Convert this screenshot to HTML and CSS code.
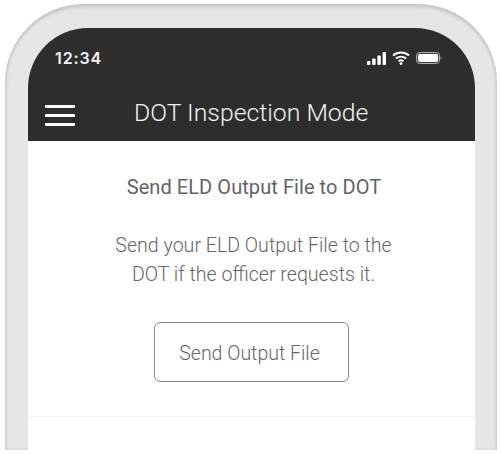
FILE: index.html
```html
<!DOCTYPE html>
<html lang="en">
<head>
<meta charset="utf-8">
<title>DOT Inspection Mode</title>
<link rel="stylesheet" href="styles.css">
</head>
<body>
<div class="phone">
  <div class="screen">
    <header class="appbar">
      <div class="status">
        <span class="time">12:34</span>
        <div class="status-icons">
          <svg class="signal" width="20" height="13" viewBox="0 0 20 13"><rect x="0" y="9" width="3.4" height="4" rx=".8"/><rect x="5.2" y="6.5" width="3.4" height="6.5" rx=".8"/><rect x="10.4" y="3.5" width="3.4" height="9.5" rx=".8"/><rect x="15.6" y="0" width="3.4" height="13" rx=".8"/></svg>
          <svg class="wifi" width="18" height="14" viewBox="0 0 18 14"><path d="M1 4.600C5.600.6 12.400.6 17 4.600" /><path d="M3.900 7.600C6.900 5 11.100 5 14.100 7.600"/><path d="M6.600 10.300C8 9.100 10 9.100 11.400 10.300"/><circle cx="9" cy="12.600" r="1.400"/></svg>
          <svg class="battery" width="26" height="12" viewBox="0 0 26 12"><rect x=".6" y=".6" width="23" height="10.800" rx="3.200"/><rect class="fill" x="2" y="2" width="20.200" height="8" rx="2"/><path class="cap" d="M24.800 4.200c.7.400.9 1 .9 1.800s-.2 1.400-.9 1.800z"/></svg>
        </div>
      </div>
      <div class="titlebar">
        <div class="menu"><span></span><span></span><span></span></div>
        <h1>DOT Inspection Mode</h1>
      </div>
    </header>
    <section class="panel">
      <h2>Send ELD Output File to DOT</h2>
      <p>Send your ELD Output File to the<br>DOT if the officer requests it.</p>
      <button class="send" type="button">Send Output File</button>
    </section>
  </div>
</div>
</body>
</html>
```
FILE: styles.css
```css
* { box-sizing: border-box; }
html, body { margin: 0; height: 454px; overflow: hidden; background: #fff; }
body { font-family: Roboto, "Liberation Sans", sans-serif; }
.phone {
  margin: 4px 0 0 5px;
  width: 492px;
  height: 446px;
  padding: 24px 22px 0 23px;
  background: #e6e6e6;
  border-radius: 79px 79px 0 0;
  box-shadow: inset 0 3px 3px #c8c8c8, inset 2px 0 3px #d6d6d6, inset -2px 0 3px #d6d6d6;
}
.screen { height: 426px; background: #fff; border-radius: 60px 60px 0 0; overflow: hidden; }
.appbar { height: 113px; background: #2d2d2d; color: #fff; display: flex; flex-direction: column; }
.status { height: 60px; padding: 20px 33px 0 27px; display: flex; justify-content: space-between; align-items: flex-start; }
.time { font-family: Inter, Roboto, sans-serif; font-size: 16px; line-height: 20px; font-weight: 600; letter-spacing: .9px; color: #f4f4f4; }
.status-icons { display: flex; align-items: center; gap: 5px; height: 20px; }
.signal { fill: #fff; }
.wifi { fill: #fff; }
.wifi path { fill: none; stroke: #fff; stroke-width: 2; }
.battery { margin-left: 1px; }
.battery rect { fill: none; stroke: #bdbdbd; stroke-width: 1; }
.battery rect.fill { fill: #fff; stroke: none; }
.battery .cap { fill: #8a8a8a; }
.titlebar { flex: 1; display: flex; align-items: flex-start; padding: 0 0 0 17px; }
.menu { width: 30px; margin-top: 17px; display: flex; flex-direction: column; gap: 6px; }
.menu span { display: block; height: 3px; background: #fff; border-radius: 1px; }
h1 { margin: 11px 0 0 59px; font-size: 24.8px; line-height: 28px; font-weight: 300; color: #f2f2f2; white-space: nowrap; }
.panel { height: 276px; border-bottom: 1px solid #f4f4f4; display: flex; flex-direction: column; align-items: center; color: #5c5c5c; }
h2 { margin: 35px 0 0 5px; font-size: 20px; line-height: 22px; font-weight: 400; letter-spacing: .07px; color: #636363; white-space: nowrap; }
p { margin: 33px 0 0 4px; font-size: 19.6px; line-height: 29px; font-weight: 300; text-align: center; color: #666; white-space: nowrap; }
.send { margin-top: 33px; width: 195px; height: 60px; background: #fff; border: 1px solid #8c8c8c; border-radius: 6px; font: 300 19.5px Roboto, sans-serif; color: #666; padding: 2px 4px 0 0; }
```
